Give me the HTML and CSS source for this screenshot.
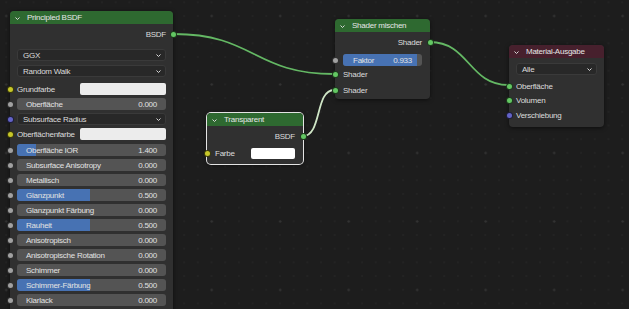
FILE: index.html
```html
<!DOCTYPE html>
<html lang="de">
<head>
    <meta charset="UTF-8">
    <title>Shader Editor</title>
    <link rel="stylesheet" href="styles.css">
</head>
<body>

<div class="editor">
    <svg class="links" width="629" height="309" viewBox="0 0 629 309">
        <path class="link" d="M174 34 C 254 34, 254 74, 334 74"/>
        <path class="link active-link" d="M303 136 C 322 136, 315 90, 334 90"/>
        <path class="link" d="M430 42 C 469 42, 469 85, 508 85"/>
    </svg>

    <!-- Principled BSDF -->
    <div class="node principled">
        <div class="node-head">
            <svg class="chev" width="5" height="3" viewBox="0 0 5 3"><polyline points="0.5,0.5 2.5,2.5 4.5,0.5"/></svg>
            <span>Principled BSDF</span>
        </div>
        <div class="node-body">
            <div class="row out sp4"><span>BSDF</span><i class="socket r green"></i></div>
            <div class="row sp9"><div class="select"><span>GGX</span><svg class="chev" width="5" height="3" viewBox="0 0 5 3"><polyline points="0.5,0.5 2.5,2.5 4.5,0.5"/></svg></div></div>
            <div class="row sp4"><div class="select"><span>Random Walk</span><svg class="chev" width="5" height="3" viewBox="0 0 5 3"><polyline points="0.5,0.5 2.5,2.5 4.5,0.5"/></svg></div></div>
            <div class="row sp6"><i class="socket l yellow"></i><span>Grundfarbe</span><div class="swatch"></div></div>
            <div class="row"><i class="socket l gray"></i><div class="slider"><span>Oberfläche</span><span>0.000</span></div></div>
            <div class="row"><i class="socket l purple"></i><div class="select"><span>Subsurface Radius</span><svg class="chev" width="5" height="3" viewBox="0 0 5 3"><polyline points="0.5,0.5 2.5,2.5 4.5,0.5"/></svg></div></div>
            <div class="row"><i class="socket l yellow"></i><span>Oberflächenfarbe</span><div class="swatch"></div></div>
            <div class="row sp4"><i class="socket l gray"></i><div class="slider"><b class="fill" style="width: 13%"></b><span>Oberfläche IOR</span><span>1.400</span></div></div>
            <div class="row"><i class="socket l gray"></i><div class="slider"><span>Subsurface Anisotropy</span><span>0.000</span></div></div>
            <div class="row"><i class="socket l gray"></i><div class="slider"><span>Metallisch</span><span>0.000</span></div></div>
            <div class="row"><i class="socket l gray"></i><div class="slider"><b class="fill" style="width: 49%"></b><span>Glanzpunkt</span><span>0.500</span></div></div>
            <div class="row"><i class="socket l gray"></i><div class="slider"><span>Glanzpunkt Färbung</span><span>0.000</span></div></div>
            <div class="row"><i class="socket l gray"></i><div class="slider"><b class="fill" style="width: 49%"></b><span>Rauheit</span><span>0.500</span></div></div>
            <div class="row"><i class="socket l gray"></i><div class="slider"><span>Anisotropisch</span><span>0.000</span></div></div>
            <div class="row"><i class="socket l gray"></i><div class="slider"><span>Anisotropische Rotation</span><span>0.000</span></div></div>
            <div class="row"><i class="socket l gray"></i><div class="slider"><span>Schimmer</span><span>0.000</span></div></div>
            <div class="row"><i class="socket l gray"></i><div class="slider"><b class="fill" style="width: 49%"></b><span>Schimmer-Färbung</span><span>0.500</span></div></div>
            <div class="row"><i class="socket l gray"></i><div class="slider"><span>Klarlack</span><span>0.000</span></div></div>
        </div>
    </div>

    <!-- Transparent -->
    <div class="node transparent selected">
        <div class="node-head">
            <svg class="chev" width="5" height="3" viewBox="0 0 5 3"><polyline points="0.5,0.5 2.5,2.5 4.5,0.5"/></svg>
            <span>Transparent</span>
        </div>
        <div class="node-body">
            <div class="row out sp4"><span>BSDF</span><i class="socket r green"></i></div>
            <div class="row sp5"><i class="socket l yellow"></i><span>Farbe</span><div class="swatch white"></div></div>
        </div>
    </div>

    <!-- Shader mischen -->
    <div class="node mix">
        <div class="node-head">
            <svg class="chev" width="5" height="3" viewBox="0 0 5 3"><polyline points="0.5,0.5 2.5,2.5 4.5,0.5"/></svg>
            <span>Shader mischen</span>
        </div>
        <div class="node-body">
            <div class="row out sp4"><span>Shader</span><i class="socket r green"></i></div>
            <div class="row sp6"><i class="socket l gray"></i><div class="slider factor"><b class="fill" style="width: 93.3%"></b><span>Faktor</span><span>0.933</span></div></div>
            <div class="row sp2"><i class="socket l green"></i><span>Shader</span></div>
            <div class="row sp4"><i class="socket l green"></i><span>Shader</span></div>
        </div>
    </div>

    <!-- Material-Ausgabe -->
    <div class="node output">
        <div class="node-head">
            <svg class="chev" width="5" height="3" viewBox="0 0 5 3"><polyline points="0.5,0.5 2.5,2.5 4.5,0.5"/></svg>
            <span>Material-Ausgabe</span>
        </div>
        <div class="node-body">
            <div class="row sp5"><div class="select"><span>Alle</span><svg class="chev" width="5" height="3" viewBox="0 0 5 3"><polyline points="0.5,0.5 2.5,2.5 4.5,0.5"/></svg></div></div>
            <div class="row sp5"><i class="socket l green"></i><span>Oberfläche</span></div>
            <div class="row sp2"><i class="socket l green"></i><span>Volumen</span></div>
            <div class="row sp3"><i class="socket l purple"></i><span>Verschiebung</span></div>
        </div>
    </div>
</div>

</body>
</html>
```

FILE: styles.css
```css
body {
    margin: 0;
    background: #1d1d1d;
    font-family: "Liberation Sans", Arial, sans-serif;
    font-size: 8px;
    letter-spacing: -0.25px;
    color: #dcdcdc;
}

.editor {
    position: relative;
    width: 629px;
    height: 309px;
    overflow: hidden;
    background-color: #1d1d1d;
    background-image:
        radial-gradient(circle, #333333 0.8px, transparent 1.5px),
        radial-gradient(circle, #232323 0.7px, transparent 1.3px);
    background-size: 68.5px 68.5px, 13.7px 13.7px;
    background-position: -28px -18.25px, -0.65px -4.55px;
}

/* Links */
.links {
    position: absolute;
    left: 0;
    top: 0;
}

.link {
    fill: none;
    stroke: #64b864;
    stroke-width: 1.8;
}

.active-link {
    stroke: #cfe6c6;
}

/* Nodes */
.node {
    position: absolute;
    background: #303030;
    border-radius: 4px;
    box-shadow: 0 1px 4px rgba(0, 0, 0, 0.55);
    --pad: 7px;
}

.principled {
    left: 10px;
    top: 11px;
    width: 163px;
    height: 320px;
}

.transparent {
    left: 207px;
    top: 113px;
    width: 96px;
    height: 51px;
    --pad: 8px;
}

.mix {
    left: 335px;
    top: 19px;
    width: 95px;
    height: 80px;
    --pad: 8px;
}

.output {
    left: 509px;
    top: 45px;
    width: 95px;
    height: 82px;
}

.selected {
    box-shadow: 0 0 0 1px #e4e4e4, 0 1px 4px rgba(0, 0, 0, 0.55);
}

.node-head {
    display: flex;
    align-items: center;
    height: 13px;
    padding-left: 5px;
    background: #2e6930;
    border-radius: 4px 4px 0 0;
    color: #e6e6e6;
}

.output .node-head {
    background: #47202d;
}

.node-head .chev {
    margin-right: 7px;
    margin-top: 1px;
}

.chev polyline {
    fill: none;
    stroke: #d8d8d8;
    stroke-width: 1;
}

.node-body {
    display: flex;
    flex-direction: column;
    padding: 0 var(--pad);
}

/* Rows */
.row {
    position: relative;
    display: flex;
    align-items: center;
    height: 12px;
    margin-top: 3px;
}

.row.out {
    justify-content: flex-end;
}

.sp2 { margin-top: 2px; }
.sp3 { margin-top: 3px; }
.sp4 { margin-top: 4px; }
.sp5 { margin-top: 5px; }
.sp6 { margin-top: 6px; }
.sp9 { margin-top: 9px; }

.socket {
    position: absolute;
    top: 2.5px;
    width: 7px;
    height: 7px;
    box-sizing: border-box;
    border-radius: 50%;
    border: 1px solid rgba(0, 0, 0, 0.7);
}

.socket.l { left: calc(-1 * var(--pad) - 3.5px); }
.socket.r { right: calc(-1 * var(--pad) - 3.5px); }

.green { background: #63c763; }
.gray { background: #a1a1a1; }
.yellow { background: #c7c729; }
.purple { background: #6363c7; }

/* Widgets */
.select {
    flex: 1;
    display: flex;
    align-items: center;
    justify-content: space-between;
    height: 12px;
    box-sizing: border-box;
    padding: 0 4px 0 5px;
    background: #282828;
    border: 1px solid #3a3a3a;
    border-radius: 3px;
}

.select .chev {
    margin-top: 1px;
}

.slider {
    flex: 1;
    position: relative;
    display: flex;
    align-items: center;
    justify-content: space-between;
    height: 12px;
    box-sizing: border-box;
    padding: 0 9px;
    background: #545454;
    border-radius: 3px;
    overflow: hidden;
    color: #e2e2e2;
}

.slider span {
    position: relative;
}

.fill {
    position: absolute;
    left: 0;
    top: 0;
    bottom: 0;
    background: #4772b3;
}

.factor {
    padding: 0 10px;
}

.swatch {
    margin-left: auto;
    width: 86px;
    height: 12px;
    background: #ececec;
    border-radius: 2px;
}

.swatch.white {
    width: 44px;
    height: 11px;
    background: #ffffff;
}
```
